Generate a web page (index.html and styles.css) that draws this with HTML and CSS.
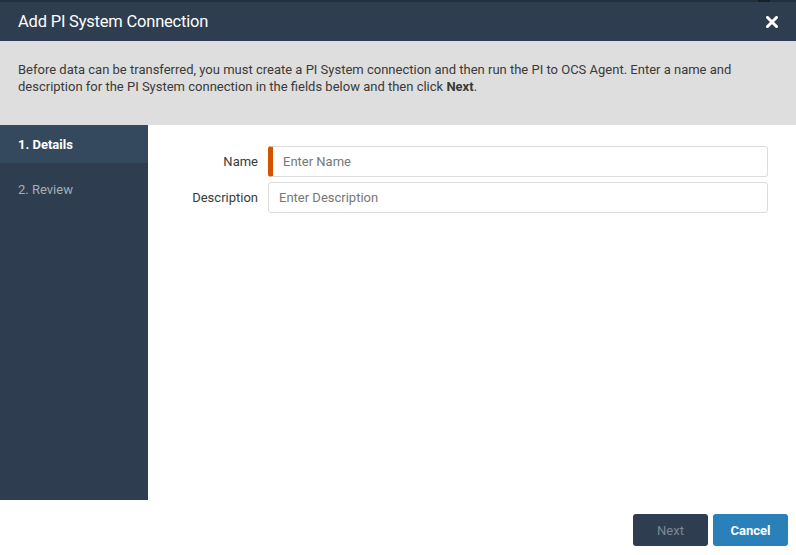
FILE: index.html
```html
<!DOCTYPE html>
<html>
<head>
<meta charset="utf-8">
<link rel="stylesheet" href="styles.css">
</head>
<body>
<div class="dialog">
  <div class="topstrip"><span class="topstrip-mark"></span></div>
  <header class="header">
    <h1 class="title">Add PI System Connection</h1>
    <span class="close">
      <svg width="12" height="12" viewBox="0 0 12 12"><path d="M1.5 1.5 L10.5 10.5 M10.5 1.5 L1.5 10.5" stroke="#fff" stroke-width="3" stroke-linecap="square"/></svg>
    </span>
  </header>
  <div class="info">
    <p>Before data can be transferred, you must create a PI System connection and then run the PI to OCS Agent. Enter a name and description for the PI System connection in the fields below and then click <b>Next</b>.</p>
  </div>
  <div class="main">
    <nav class="steps">
      <div class="step active">1. Details</div>
      <div class="step">2. Review</div>
    </nav>
    <div class="form">
      <div class="row">
        <label class="label">Name</label>
        <input class="input required" placeholder="Enter Name">
      </div>
      <div class="row">
        <label class="label">Description</label>
        <input class="input" placeholder="Enter Description">
      </div>
    </div>
  </div>
  <footer class="footer">
    <button class="btn next">Next</button>
    <button class="btn cancel">Cancel</button>
  </footer>
</div>
</body>
</html>
```
FILE: styles.css
```css
* { box-sizing: border-box; }
html, body { margin: 0; padding: 0; }
body {
  width: 796px;
  height: 555px;
  overflow: hidden;
  font-family: Roboto, "Liberation Sans", sans-serif;
  background: #fff;
}
.dialog {
  display: flex;
  flex-direction: column;
  height: 555px;
}
.topstrip {
  height: 2px;
  background: #223140;
  position: relative;
}
.topstrip-mark {
  position: absolute;
  left: 758px;
  top: 0;
  width: 12px;
  height: 2px;
  background: #1a1f26;
}
.header {
  height: 39px;
  background: #2e3e50;
  display: flex;
  align-items: center;
  justify-content: space-between;
  padding: 0 18px 0 18px;
}
.title {
  margin: 0;
  font-size: 16.5px;
  font-weight: 400;
  color: #fff;
  letter-spacing: -0.2px;
}
.close { display: flex; }
.info {
  height: 84px;
  background: #dedede;
  padding: 20px 18px 0 18px;
}
.info p {
  margin: 0;
  font-size: 13px;
  line-height: 17px;
  color: #3a3a3a;
}
.info b { font-weight: 700; }
.main {
  display: flex;
  height: 375px;
}
.steps {
  width: 148px;
  background: #2e3d4f;
}
.step {
  height: 38px;
  padding: 0 18px;
  display: flex;
  align-items: center;
  font-size: 13px;
  color: #a6adb5;
}
.step.active {
  background: #35495e;
  color: #fff;
  font-weight: 700;
}
.step + .step { height: 52px; }
.form {
  flex: 1;
  padding: 21px 28px 0 0;
  display: flex;
  flex-direction: column;
  gap: 5px;
}
.row {
  display: flex;
  align-items: center;
}
.label {
  width: 120px;
  text-align: right;
  padding-right: 10px;
  font-size: 13px;
  color: #3a3a3a;
}
.input {
  flex: 1;
  height: 31px;
  border: 1px solid #dcdcdc;
  border-radius: 3px;
  padding: 0 10px;
  font-family: Roboto, "Liberation Sans", sans-serif;
  font-size: 13px;
  color: #333;
  outline: none;
}
.input::placeholder { color: #777; }
.input.required {
  border-left: 5px solid #d35400;
  padding-left: 10px;
}
.footer {
  flex: 1;
  display: flex;
  justify-content: flex-end;
  align-items: flex-start;
  padding: 14px 8px 0 0;
  gap: 5px;
}
.btn {
  width: 75px;
  height: 32px;
  border: none;
  border-radius: 3px;
  font-family: Roboto, "Liberation Sans", sans-serif;
  font-size: 13px;
}
.btn.next {
  background: #2e3d4f;
  color: #7f8893;
}
.btn.cancel {
  background: #2a80b9;
  color: #fff;
  font-weight: 700;
}
```
